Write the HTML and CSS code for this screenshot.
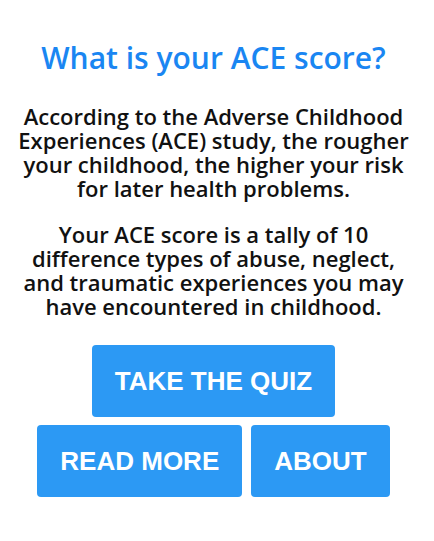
FILE: index.html
```html
<!DOCTYPE html>
<html lang="en">
<head>
  <meta charset="UTF-8">
  <title>ACE Score</title>
  <link rel="stylesheet" href="styles.css">
</head>
<body>
  <div class="intro">
    <h1>What is your ACE score?</h1>
    <p>According to the Adverse Childhood Experiences (ACE) study, the rougher your childhood, the higher your risk for later health problems.</p>
    <p>Your ACE score is a tally of 10 difference types of abuse, neglect, and traumatic experiences you may have encountered in childhood.</p>

    <div class="actions">
      <a class="btn" href="#quiz">TAKE THE QUIZ</a>
      <div class="row">
        <a class="btn" href="#more">READ MORE</a>
        <a class="btn" href="#about">ABOUT</a>
      </div>
    </div>
  </div>
</body>
</html>
```

FILE: styles.css
```css
body {
  margin: 0;
  background-color: #fff;
  font-family: "Open Sans", "Noto Sans", sans-serif;
  color: #111;
}

.intro {
  padding: 40px 17px 40px 10px;
  text-align: center;
}

h1 {
  margin: 0 0 28px;
  font-size: 30px;
  font-weight: 600;
  line-height: 36px;
  color: #1a86f2;
}

p {
  max-width: 400px;
  margin: 0 auto 22px;
  font-size: 22px;
  font-weight: 600;
  line-height: 24px;
}

/* Buttons */
.actions {
  display: flex;
  flex-direction: column;
  align-items: center;
  gap: 8px;
  margin-top: 27px;
}

.row {
  display: flex;
  gap: 9px;
}

.btn {
  display: block;
  padding: 0 23px;
  height: 72px;
  line-height: 72px;
  background-color: #2c99f4;
  color: #fff;
  font-family: "Liberation Sans", Arial, sans-serif;
  font-size: 26px;
  font-weight: bold;
  text-decoration: none;
  border-radius: 4px;
}
```
